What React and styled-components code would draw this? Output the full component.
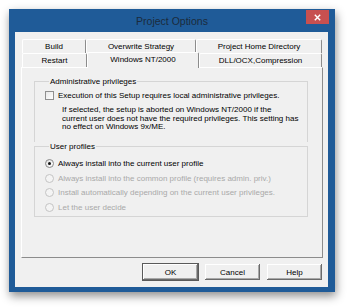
import React from "react";
import styled, { createGlobalStyle } from "styled-components";

const Global = createGlobalStyle`
  html, body { margin: 0; padding: 0; background: #ffffff; }
  body {
    width: 350px; height: 308px; overflow: hidden;
    font-family: "Liberation Sans", Arial, sans-serif;
  }
`;

const Page = styled.div`
  padding: 9px 15px 16px 9px;
`;

const Window = styled.div`
  width: 326px;
  height: 283px;
  box-sizing: border-box;
  background: #1f5b98;
  display: flex;
  flex-direction: column;
  box-shadow: 1px 4px 9px rgba(0, 0, 0, 0.45);
`;

const TitleBar = styled.div`
  height: 23px;
  flex: none;
  display: grid;
  grid-template-columns: 1fr auto 1fr;
`;

const Title = styled.div`
  grid-column: 2;
  align-self: center;
  margin-top: 1px;
  font-size: 10.5px;
  color: #1b2b3c;
  white-space: nowrap;
`;

const CloseButton = styled.div`
  grid-column: 3;
  justify-self: end;
  margin: 1px 6px 0 0;
  width: 23px;
  height: 14px;
  background: #c75050;
  display: flex;
  align-items: center;
  justify-content: center;
`;

const Client = styled.div`
  flex: 1;
  margin: 0 7px 5px 6px;
  background: #f0f0f0;
  padding: 7px 5px 6px 6px;
  display: flex;
  flex-direction: column;
`;

const TabRows = styled.div`
  margin-left: 1px;
  width: 300px;
`;

const TabRow = styled.div`
  display: flex;
  height: 14px;
`;

const Tab = styled.div`
  box-sizing: border-box;
  width: ${(p) => p.$w}px;
  height: ${(p) => (p.$active ? 16 : 14)}px;
  margin-top: ${(p) => (p.$active ? -1 : 0)}px;
  padding-bottom: ${(p) => (p.$active ? 2 : 0)}px;
  position: ${(p) => (p.$active ? "relative" : "static")};
  z-index: ${(p) => (p.$active ? 1 : "auto")};
  background: #f0f0f0;
  border-top: 1px solid #ffffff;
  border-left: 1px solid #ffffff;
  border-right: 1px solid #8c8c8c;
  border-radius: 2px 2px 0 0;
  display: flex;
  align-items: center;
  justify-content: center;
  font-size: 8px;
  line-height: 9px;
  color: #000;
  white-space: nowrap;
`;

const Panel = styled.div`
  box-sizing: border-box;
  height: 191px;
  border-top: 1px solid #ffffff;
  border-left: 1px solid #ffffff;
  border-right: 1px solid #8c8c8c;
  border-bottom: 1px solid #8c8c8c;
  padding: 9px 14px 0 12px;
  display: flex;
  flex-direction: column;
`;

const Group = styled.fieldset`
  margin: 0;
  min-width: 0;
  border: 1px solid #d5d5d5;
  border-bottom: ${(p) => (p.$open ? "none" : "1px solid #d5d5d5")};
  padding: ${(p) => p.$pad};
`;

const Legend = styled.legend`
  margin-left: 4px;
  padding: 0 1px;
  font-size: 8px;
  line-height: 9px;
  color: #000;
`;

const CheckRow = styled.div`
  display: flex;
  align-items: center;
  gap: 4px;
  height: 9px;
  font-size: 8px;
  line-height: 9px;
  color: #000;
  white-space: nowrap;
`;

const CheckBox = styled.span`
  box-sizing: border-box;
  width: 9px;
  height: 9px;
  flex: none;
  border: 1px solid #8f8f8f;
  background: linear-gradient(135deg, #e8e8e8, #ffffff);
`;

const Description = styled.p`
  margin: 6px 0 0 17px;
  font-size: 8px;
  line-height: 8.7px;
  color: #000;
`;

const RadioList = styled.div`
  display: flex;
  flex-direction: column;
`;

const RadioRow = styled.div`
  display: flex;
  align-items: center;
  gap: 4px;
  height: 14.67px;
  font-size: 8px;
  line-height: 9px;
  white-space: nowrap;
  color: ${(p) => (p.$disabled ? "#a9a9a9" : "#000")};
`;

const RadioCircle = styled.span`
  box-sizing: border-box;
  width: 9px;
  height: 9px;
  flex: none;
  border-radius: 50%;
  border: 1px solid ${(p) => (p.$disabled ? "#c4c4c4" : "#8a8a8a")};
  background: ${(p) =>
    p.$disabled ? "#f4f4f4" : "linear-gradient(135deg, #e2e2e2, #ffffff)"};
  display: flex;
  align-items: center;
  justify-content: center;
`;

const RadioDot = styled.span`
  width: 3px;
  height: 3px;
  border-radius: 50%;
  background: #111;
`;

const ButtonBar = styled.div`
  margin-top: 5px;
  display: flex;
  justify-content: flex-end;
  gap: 5px;
`;

const Button = styled.button`
  box-sizing: border-box;
  width: 57px;
  height: 18px;
  padding: 0;
  margin: 0;
  background: #f0f0f0;
  border: 1px solid ${(p) => (p.$default ? "#5a5a5a" : "transparent")};
  box-shadow: inset -1px -1px 0 #6b6b6b, inset 1px 1px 0 #ffffff,
    inset -2px -2px 0 #a8a8a8;
  font-family: "Liberation Sans", Arial, sans-serif;
  font-size: 8px;
  color: #000;
`;

const topTabs = [
  { label: "Build", w: 64 },
  { label: "Overwrite Strategy", w: 110 },
  { label: "Project Home Directory", w: 126 },
];

const bottomTabs = [
  { label: "Restart", w: 65 },
  { label: "Windows NT/2000", w: 112, active: true },
  { label: "DLL/OCX,Compression", w: 123 },
];

const radios = [
  { label: "Always install into the current user profile", checked: true },
  { label: "Always install into the common profile (requires admin. priv.)", disabled: true },
  { label: "Install automatically depending on the current user privileges.", disabled: true },
  { label: "Let the user decide", disabled: true },
];

export default function App() {
  return (
    <>
      <Global />
      <Page>
        <Window>
          <TitleBar>
            <Title>Project Options</Title>
            <CloseButton>
              <svg width="7" height="7" viewBox="0 0 7 7">
                <path d="M0.8 0.8 L6.2 6.2 M6.2 0.8 L0.8 6.2" stroke="#fff" strokeWidth="1.4" />
              </svg>
            </CloseButton>
          </TitleBar>
          <Client>
            <TabRows>
              <TabRow>
                {topTabs.map((t) => (
                  <Tab key={t.label} $w={t.w}>{t.label}</Tab>
                ))}
              </TabRow>
              <TabRow>
                {bottomTabs.map((t) => (
                  <Tab key={t.label} $w={t.w} $active={t.active}>{t.label}</Tab>
                ))}
              </TabRow>
            </TabRows>
            <Panel>
              <Group $open $pad="5px 0 10px 10px">
                <Legend>Administrative privileges</Legend>
                <CheckRow>
                  <CheckBox />
                  Execution of this Setup requires local administrative privileges.
                </CheckRow>
                <Description>
                  If selected, the setup is aborted on Windows NT/2000 if the
                  <br />
                  current user does not have the required privileges. This setting has
                  <br />
                  no effect on Windows 9x/ME.
                </Description>
              </Group>
              <Group $pad="5px 0 1px 10px">
                <Legend>User profiles</Legend>
                <RadioList>
                  {radios.map((r) => (
                    <RadioRow key={r.label} $disabled={r.disabled}>
                      <RadioCircle $disabled={r.disabled}>
                        {r.checked && <RadioDot />}
                      </RadioCircle>
                      {r.label}
                    </RadioRow>
                  ))}
                </RadioList>
              </Group>
            </Panel>
            <ButtonBar>
              <Button $default>OK</Button>
              <Button>Cancel</Button>
              <Button>Help</Button>
            </ButtonBar>
          </Client>
        </Window>
      </Page>
    </>
  );
}
